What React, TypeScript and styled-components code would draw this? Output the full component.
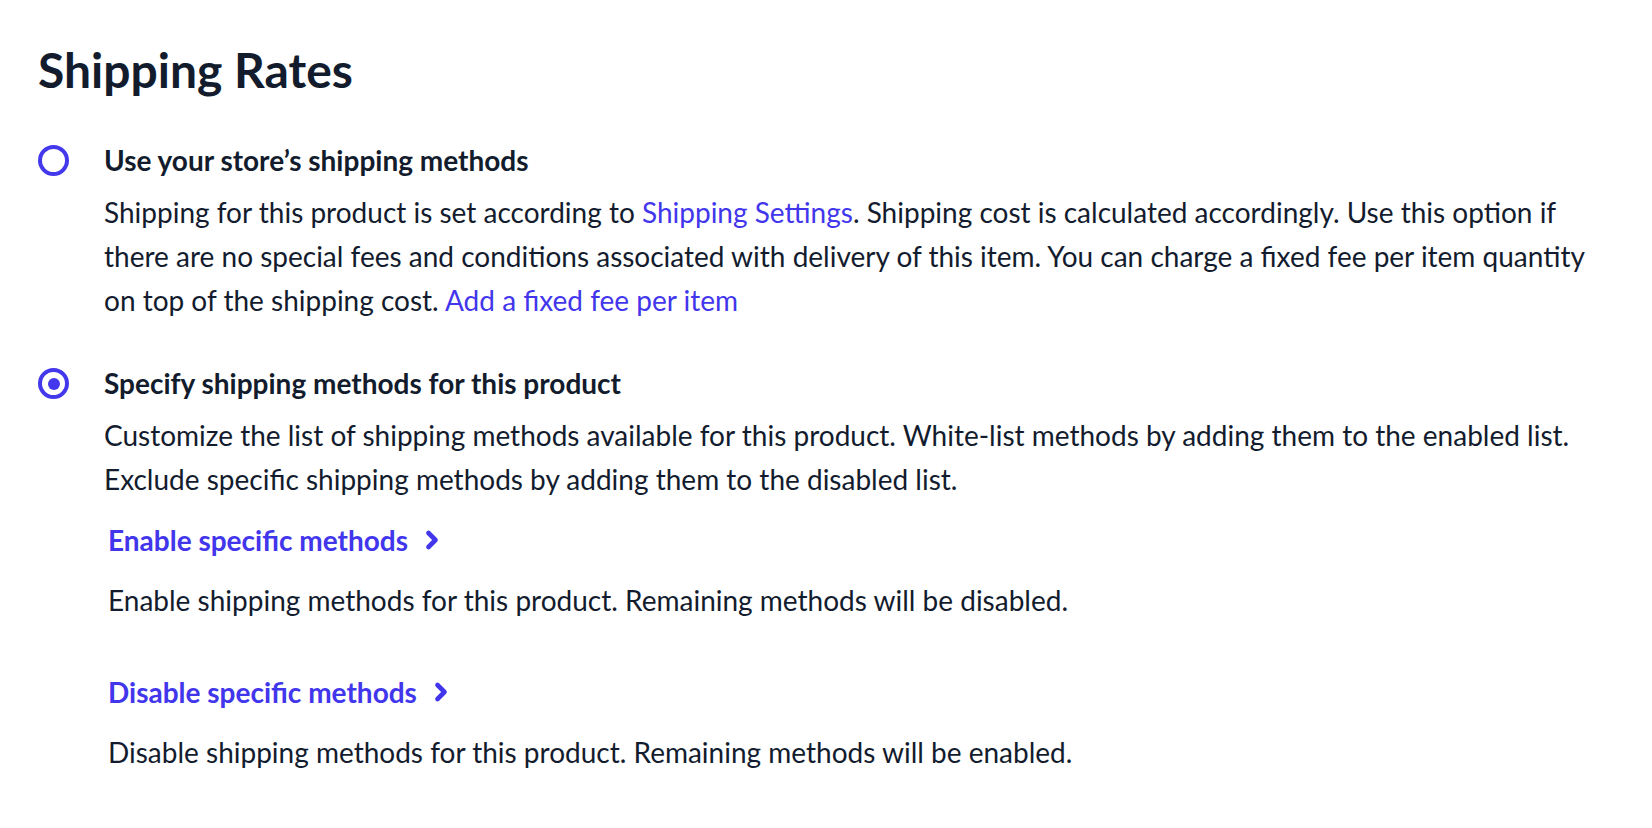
import React, { useState } from "react";
import styled, { createGlobalStyle } from "styled-components";
import { ChevronRight } from "lucide-react";

const GlobalStyle = createGlobalStyle`
  body {
    margin: 0;
    background: #ffffff;
    font-family: Lato, "Open Sans", sans-serif;
    color: #131c2e;
  }
`;

const Page = styled.div`
  padding: 41px 50px 0 38px;
`;

const Title = styled.h1`
  margin: 0 0 39px;
  font-size: 48px;
  line-height: 58px;
  font-weight: 700;
  color: #121c2d;
`;

const Option = styled.div`
  display: grid;
  grid-template-columns: 66px 1fr;
  margin-bottom: 39px;
`;

const Radio = styled.span<{ checked?: boolean }>`
  box-sizing: border-box;
  width: 31px;
  height: 31px;
  margin-top: 7px;
  border-radius: 50%;
  border: 4px solid #4438ec;
  display: flex;
  align-items: center;
  justify-content: center;
  cursor: pointer;

  &::after {
    content: "";
    width: 12px;
    height: 12px;
    border-radius: 50%;
    background: #4438ec;
    display: ${({ checked }) => (checked ? "block" : "none")};
  }
`;

const OptionBody = styled.div`
  display: flex;
  flex-direction: column;
`;

const OptionLabel = styled.div`
  margin-bottom: 8px;
  font-size: 28px;
  line-height: 44px;
  font-weight: 700;
  color: #121c2d;
  cursor: pointer;
`;

const Text = styled.p`
  margin: 0;
  font-size: 28px;
  line-height: 44px;
  color: #131c2e;
`;

const InlineLink = styled.a`
  color: #4236ec;
  text-decoration: none;
  cursor: pointer;
`;

const Methods = styled.div`
  padding-left: 4px;
  margin-top: 17px;
  display: flex;
  flex-direction: column;
  gap: 48px;
`;

const MethodLink = styled.a`
  display: inline-flex;
  align-items: center;
  gap: 10px;
  font-size: 28px;
  line-height: 44px;
  font-weight: 700;
  color: #4236ec;
  text-decoration: none;
  cursor: pointer;
`;

const MethodBlock = styled.div`
  display: flex;
  flex-direction: column;
  gap: 16px;
`;

const methods = [
  {
    label: "Enable specific methods",
    text: "Enable shipping methods for this product. Remaining methods will be disabled.",
  },
  {
    label: "Disable specific methods",
    text: "Disable shipping methods for this product. Remaining methods will be enabled.",
  },
];

const App: React.FC = () => {
  const [mode, setMode] = useState<"store" | "product">("product");

  return (
    <Page>
      <GlobalStyle />
      <Title>Shipping Rates</Title>

      <Option>
        <Radio checked={mode === "store"} onClick={() => setMode("store")} />
        <OptionBody>
          <OptionLabel onClick={() => setMode("store")}>
            Use your store’s shipping methods
          </OptionLabel>
          <Text>
            Shipping for this product is set according to{" "}
            <InlineLink>Shipping Settings</InlineLink>. Shipping cost is
            calculated accordingly. Use this option if there are no special
            fees and conditions associated with delivery of this item. You can
            charge a fixed fee per item quantity on top of the shipping cost.{" "}
            <InlineLink>Add a fixed fee per item</InlineLink>
          </Text>
        </OptionBody>
      </Option>

      <Option>
        <Radio
          checked={mode === "product"}
          onClick={() => setMode("product")}
        />
        <OptionBody>
          <OptionLabel onClick={() => setMode("product")}>
            Specify shipping methods for this product
          </OptionLabel>
          <Text>
            Customize the list of shipping methods available for this product.
            White-list methods by adding them to the enabled list. Exclude
            specific shipping methods by adding them to the disabled list.
          </Text>
          <Methods>
            {methods.map((m) => (
              <MethodBlock key={m.label}>
                <MethodLink>
                  {m.label}
                  <ChevronRight size={28} strokeWidth={4} />
                </MethodLink>
                <Text>{m.text}</Text>
              </MethodBlock>
            ))}
          </Methods>
        </OptionBody>
      </Option>
    </Page>
  );
};

export default App;
